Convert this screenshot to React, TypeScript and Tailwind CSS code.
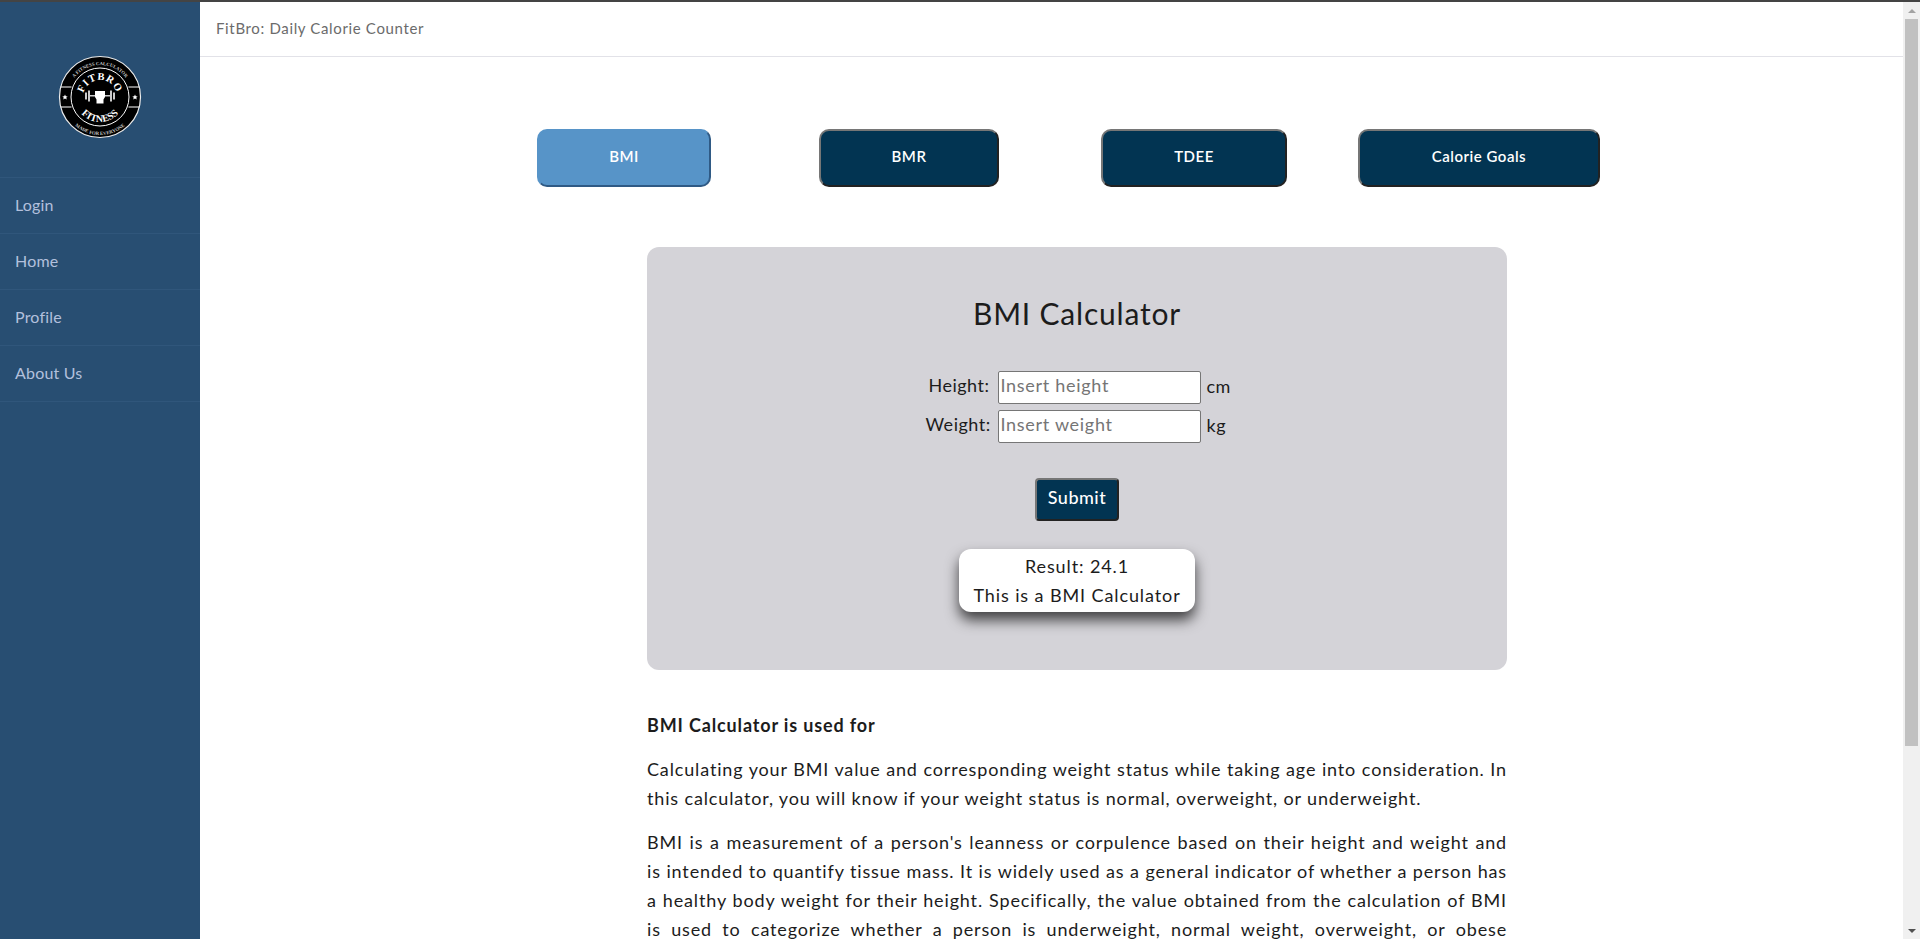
const font = "font-['Lato','Open_Sans',sans-serif]";

function Logo() {
  return (
    <svg width="84" height="84" viewBox="0 0 84 84">
      <defs>
        <path id="topArc" d="M10 42a32 32 0 0 1 64 0" />
        <path id="botArc" d="M4 42a38 38 0 0 0 76 0" />
        <path id="fitArc" d="M25 42a17 17 0 0 1 34 0" />
        <path id="fitnessArc" d="M17 42a25 25 0 0 0 50 0" />
      </defs>
      <circle cx="42" cy="42" r="40.5" fill="#000" stroke="#ececec" strokeWidth="1.2" />
      <circle cx="42" cy="42" r="29" fill="none" stroke="#fff" strokeWidth="1" />
      <path d="M2.5 32h11M2.5 52h11M70.5 32h11M70.5 52h11" stroke="#fff" strokeWidth="1.2" />
      <text fontFamily="Liberation Serif, serif" fontSize="4.8" fontWeight="700" fill="#ccc" textAnchor="middle">
        <textPath href="#topArc" startOffset="50%">A FITNESS CALCULATOR</textPath>
      </text>
      <text fontFamily="Liberation Serif, serif" fontSize="4.8" fontWeight="700" fill="#ccc" textAnchor="middle">
        <textPath href="#botArc" startOffset="50%">MADE FOR EVERYONE</textPath>
      </text>
      <text fontFamily="Liberation Serif, serif" fontSize="10.5" fontWeight="700" fill="#fff" textAnchor="middle" letterSpacing="0.8">
        <textPath href="#fitArc" startOffset="50%">FITBRO</textPath>
      </text>
      <text fontFamily="Liberation Serif, serif" fontSize="10" fontWeight="700" fill="#fff" textAnchor="middle">
        <textPath href="#fitnessArc" startOffset="50%">FITNESS</textPath>
      </text>
      <path d="M7 39.5l.8 1.7 1.9.2-1.4 1.2.4 1.9-1.7-1-1.7 1 .4-1.9-1.4-1.2 1.9-.2zM77 39.5l.8 1.7 1.9.2-1.4 1.2.4 1.9-1.7-1-1.7 1 .4-1.9-1.4-1.2 1.9-.2z" fill="#fff" />
      <path d="M27 37.5h2v7h-2zM30 35.5h2v11h-2zM52 35.5h2v11h-2zM55 37.5h2v7h-2zM32 40h20v1.4H32z" fill="#ccc" />
      <path d="M37 36h10v6l-1.5 2.5v4h-7v-4L37 42z" fill="#fff" />
    </svg>
  );
}

function Tab({ label, active, className }: { label: string; active?: boolean; className: string }) {
  return (
    <button
      className={`h-[58px] shrink-0 rounded-[10px] pb-[3px] text-[15px] font-semibold tracking-[0.5px] text-white border-2 ${className} ${
        active
          ? "bg-[#5794c8] border-[#5794c8] border-r-[#2f5a85] border-b-[#2f5a85]"
          : "bg-[#023452] border-t-[#767676] border-l-[#767676] border-r-[#222] border-b-[#222]"
      }`}
    >
      {label}
    </button>
  );
}

const nav = ["Login", "Home", "Profile", "About Us"];

export default function App() {
  return (
    <div className={`h-[939px] overflow-hidden flex flex-col bg-white ${font}`}>
      <div className="h-[2px] bg-[#444] shrink-0" />
      <div className="flex flex-1 min-h-0">
        <aside className="w-[200px] shrink-0 bg-[#284e72]">
          <div className="h-[175px] flex justify-center pt-[53px]">
            <Logo />
          </div>
          <ul className="text-[16px] tracking-[0.2px] text-[#b3c0dd] border-t border-[#30567b]">
            {nav.map((item) => (
              <li key={item} className="h-[56px] flex items-center px-[15px] pb-[2px] border-b border-[#30567b]">
                {item}
              </li>
            ))}
          </ul>
        </aside>

        <main className="flex-1 min-w-0 overflow-hidden">
          <header className="h-[55px] flex items-center px-[16px] pb-[2px] border-b border-[#e2e2e8] text-[15px] tracking-[0.65px] text-[#6b6b6b]">
            FitBro: Daily Calorie Counter
          </header>

          <div className="flex pt-[72px] pl-[337px]">
            <Tab label="BMI" active className="w-[174px]" />
            <Tab label="BMR" className="w-[180px] ml-[108px]" />
            <Tab label="TDEE" className="w-[186px] ml-[102px]" />
            <Tab label="Calorie Goals" className="w-[242px] ml-[71px]" />
          </div>

          <div className="w-[860px] ml-[447px] mt-[60px] text-[#1c1c1c]">
            <section className="h-[423px] rounded-[12px] bg-[#d4d3d8] flex flex-col items-center">
              <h1 className="mt-[46px] text-[30px] leading-[40px] tracking-[0.8px]">BMI Calculator</h1>

              <div className="mt-[38px] flex flex-col gap-[6px] text-[18px] pl-[8px]">
                <div className="flex items-center gap-[6px]">
                  <label className="w-[64px] mr-[2px] pb-[5px] text-right tracking-[0.5px]">Height:</label>
                  <input
                    placeholder="Insert height"
                    className="w-[203px] h-[33px] px-[2px] pb-[5px] tracking-[0.7px] bg-white border border-[#767676] rounded-[2px] placeholder:text-[#757575]"
                  />
                  <span className="w-[30px] pb-[3px] tracking-[0.5px]">cm</span>
                </div>
                <div className="flex items-center gap-[6px]">
                  <label className="w-[64px] mr-[2px] pb-[5px] text-right tracking-[0.5px]">Weight:</label>
                  <input
                    placeholder="Insert weight"
                    className="w-[203px] h-[33px] px-[2px] pb-[5px] tracking-[0.7px] bg-white border border-[#767676] rounded-[2px] placeholder:text-[#757575]"
                  />
                  <span className="w-[30px] pb-[3px] tracking-[0.5px]">kg</span>
                </div>
              </div>

              <button className="mt-[35px] w-[84px] h-[43px] rounded-[4px] pb-[4px] tracking-[0.5px] bg-[#023452] text-white text-[18px] font-medium border-2 border-t-[#767676] border-l-[#767676] border-r-[#222] border-b-[#222]">
                Submit
              </button>

              <div className="mt-[28px] w-[236px] h-[63px] rounded-[12px] bg-white text-[18px] leading-[29px] tracking-[0.9px] text-center pt-[3px] shadow-[0_8px_14px_rgba(0,0,0,0.7)]">
                <p>Result: 24.1</p>
                <p>This is a BMI Calculator</p>
              </div>
            </section>

            <div className="mt-[41px] text-[18px] leading-[29px] tracking-[0.85px] text-[#1c1c1c] text-justify">
              <p className="font-bold">BMI Calculator is used for</p>
              <p className="mt-[15px]">
                Calculating your BMI value and corresponding weight status while taking age into consideration. In this
                calculator, you will know if your weight status is normal, overweight, or underweight.
              </p>
              <p className="mt-[15px]">
                BMI is a measurement of a person's leanness or corpulence based on their height and weight and is
                intended to quantify tissue mass. It is widely used as a general indicator of whether a person has a
                healthy body weight for their height. Specifically, the value obtained from the calculation of BMI is
                used to categorize whether a person is underweight, normal weight, overweight, or obese depending on
                what range the value falls between.
              </p>
            </div>
          </div>
        </main>

        <div className="w-[17px] shrink-0 bg-[#f0f0f0] flex flex-col items-center">
          <div className="h-[17px] flex items-center justify-center">
            <div className="w-0 h-0 border-x-[4px] border-x-transparent border-b-[4px] border-b-[#a3a3a3]" />
          </div>
          <div className="w-[13px] h-[727px] bg-[#c1c1c1]" />
          <div className="mt-auto h-[17px] flex items-center justify-center">
            <div className="w-0 h-0 border-x-[4px] border-x-transparent border-t-[4px] border-t-[#505050]" />
          </div>
        </div>
      </div>
    </div>
  );
}
